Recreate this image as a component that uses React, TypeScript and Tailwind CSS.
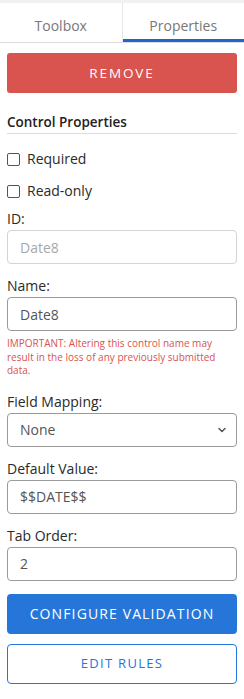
import { ChevronDown } from 'lucide-react'

const font = { fontFamily: '"Open Sans", "Noto Sans", sans-serif' }

function Field({ label, children, className = '' }: { label: string; children: React.ReactNode; className?: string }) {
  return (
    <div className={className}>
      <div className="text-[14px] leading-[18px] text-[#2a2a2a]">{label}</div>
      {children}
    </div>
  )
}

function TextBox({ value, disabled }: { value: string; disabled?: boolean }) {
  return (
    <div
      className={
        'mt-[2px] flex h-[34px] items-center rounded-[4px] border px-[12px] text-[14px] ' +
        (disabled ? 'border-[#d4d4d4] text-[#a8a8a8]' : 'border-[#9a9a9a] text-[#555]')
      }
    >
      {value}
    </div>
  )
}

export default function App() {
  return (
    <main className="min-h-screen w-[244px] bg-white" style={font}>
      <div className="h-[3px] bg-[#f0f1f0]" />
      <div className="flex h-[40px] border-b border-[#dcdcdc]">
        <div className="flex flex-1 items-center justify-center border-r border-[#e6e6e6] pt-[6px] text-[14px] text-[#777]">
          Toolbox
        </div>
        <div className="flex flex-1 items-center justify-center border-b-[3px] border-[#1b67cc] pt-[9px] text-[14px] text-[#777]">
          Properties
        </div>
      </div>

      <div className="px-[7px]">
        <button className="mt-[10px] flex h-[40px] w-full items-center justify-center rounded-[3px] bg-[#d9534f] text-[13.5px] tracking-[0.14em] text-white">
          REMOVE
        </button>

        <div className="mt-[20px] border-b border-[#dcdcdc] pb-[2px] text-[13.5px] font-semibold leading-[18px] text-[#222]">
          Control Properties
        </div>

        <label className="mt-[15px] flex items-center gap-[7px] text-[14px] leading-[20px] text-[#2a2a2a]">
          <span className="h-[13px] w-[13px] rounded-[2px] border border-[#555]" />
          Required
        </label>
        <label className="mt-[12px] flex items-center gap-[7px] text-[14px] leading-[20px] text-[#2a2a2a]">
          <span className="h-[13px] w-[13px] rounded-[2px] border border-[#555]" />
          Read-only
        </label>

        <Field label="ID:" className="mt-[9px]">
          <TextBox value="Date8" disabled />
        </Field>

        <Field label="Name:" className="mt-[13px]">
          <TextBox value="Date8" />
        </Field>

        <p className="mt-[6px] text-[10px] leading-[13.5px] text-[#d9534f]">
          IMPORTANT: Altering this control name may result in the loss of any previously submitted data.
        </p>

        <Field label="Field Mapping:" className="mt-[15px]">
          <div className="mt-[2px] flex h-[34px] items-center justify-between rounded-[4px] border border-[#9a9a9a] pl-[12px] pr-[8px] text-[14px] text-[#555]">
            None
            <ChevronDown size={12} strokeWidth={3} className="text-[#555]" />
          </div>
        </Field>

        <Field label="Default Value:" className="mt-[13px]">
          <TextBox value="$$DATE$$" />
        </Field>

        <Field label="Tab Order:" className="mt-[13px]">
          <TextBox value="2" />
        </Field>

        <button className="mt-[13px] flex h-[40px] w-full items-center justify-center rounded-[4px] bg-[#2676d9] text-[14px] tracking-[0.08em] text-white">
          CONFIGURE VALIDATION
        </button>
        <button className="mt-[10px] flex h-[40px] w-full items-center justify-center rounded-[4px] border border-[#2676d9] text-[13px] tracking-[0.1em] text-[#2676d9]">
          EDIT RULES
        </button>
      </div>
    </main>
  )
}
